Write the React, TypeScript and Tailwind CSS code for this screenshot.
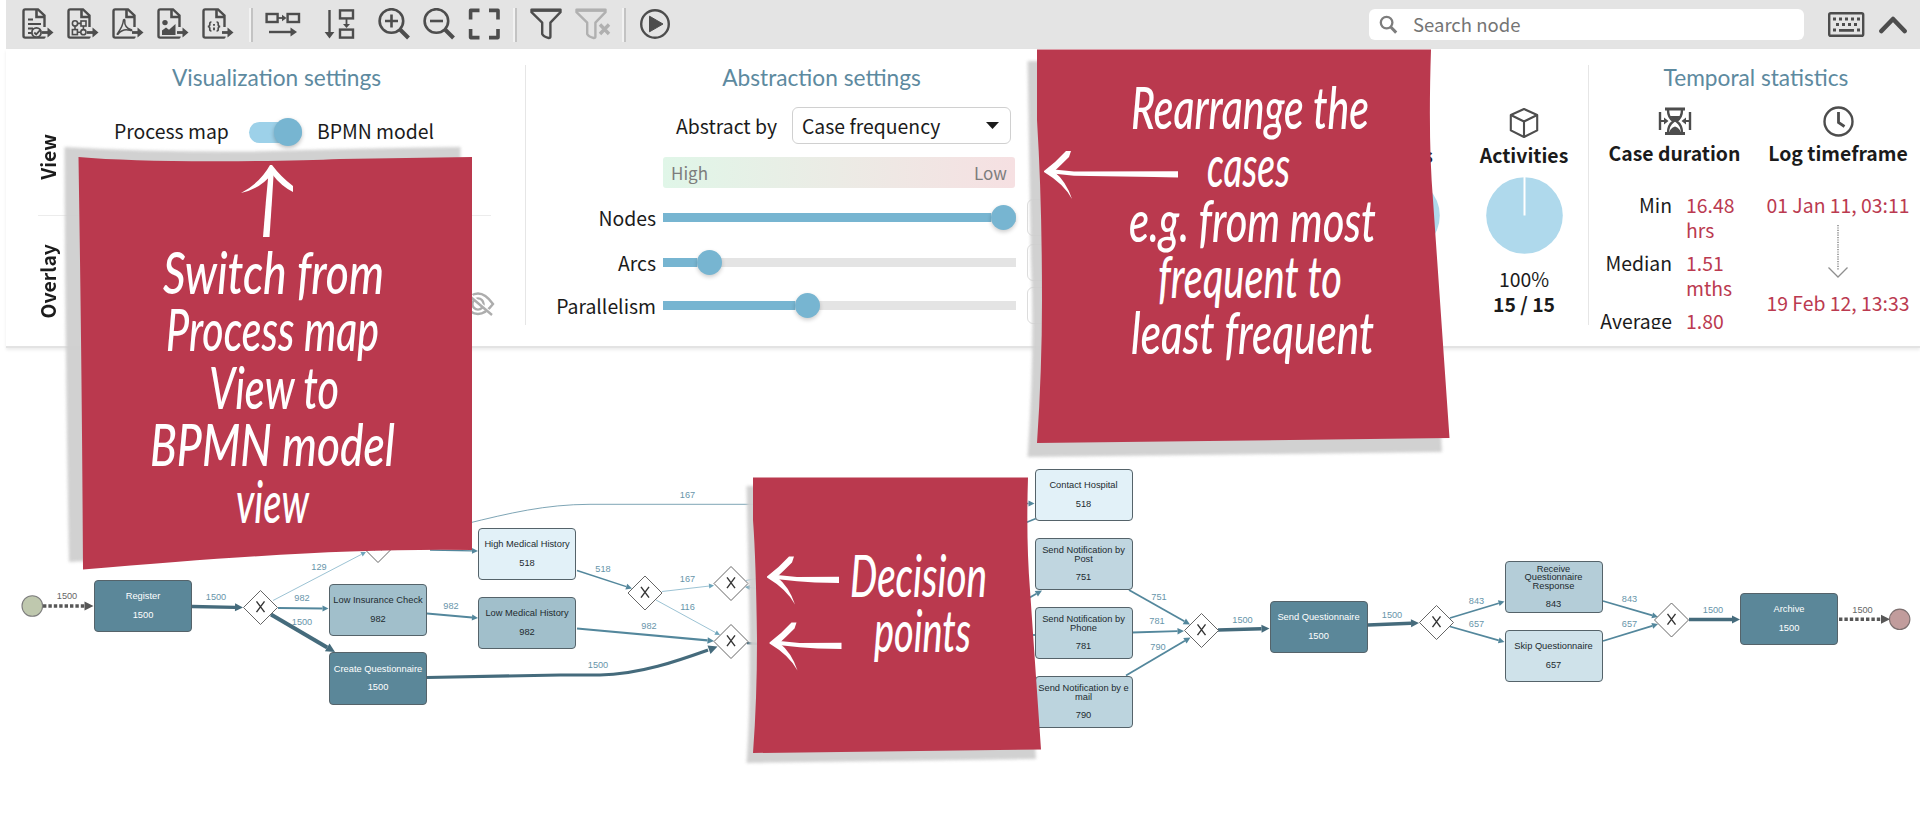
import React from "react";

const INK = "#4d4d4d";

/* ---------- toolbar icons ---------- */

function DocIcon({ children }: { children: React.ReactNode }) {
  return (
    <svg width="32" height="32" viewBox="0 0 32 32" fill="none" stroke={INK} strokeWidth="2.4" className="shrink-0">
      <path d="M22.5 19V7.5L16 1.4H3.2Q1.5 1.4 1.5 3.2V28Q1.5 29.6 3.2 29.6H21Q22.5 29.6 22.5 28.4" />
      <path d="M14.5 2V9H22" strokeWidth="2.6" />
      <path d="M20 24.5H28" strokeWidth="2.8" />
      <path d="M25.5 19.5L31.5 24.5L25.5 29.5Z" fill={INK} stroke="none" />
      {children}
    </svg>
  );
}

function FlowRight() {
  return (
    <svg width="36" height="32" viewBox="0 0 36 32" fill="none" stroke={INK} strokeWidth="2.4" className="shrink-0">
      <rect x="1.6" y="6" width="11" height="8" />
      <rect x="22.6" y="6" width="11.4" height="8" />
      <path d="M13 10H19" strokeWidth="1.8" />
      <path d="M17 6.8L21.5 10L17 13.2Z" fill={INK} stroke="none" />
      <path d="M4 24H28" />
      <path d="M25.5 19.5L32 24L25.5 28.5Z" fill={INK} stroke="none" />
    </svg>
  );
}

function FlowDown() {
  return (
    <svg width="32" height="32" viewBox="0 0 32 32" fill="none" stroke={INK} strokeWidth="2.4" className="shrink-0">
      <path d="M6.5 2V26" />
      <path d="M1.6 24H11.4L6.5 30.5Z" fill={INK} stroke="none" />
      <rect x="17" y="2.4" width="13" height="8" />
      <rect x="17" y="21.6" width="13" height="8" />
      <path d="M23.5 11V17" strokeWidth="1.8" />
      <path d="M20 16L27 16L23.5 20Z" fill={INK} stroke="none" />
    </svg>
  );
}

function Magnifier({ plus }: { plus?: boolean }) {
  return (
    <svg width="32" height="32" viewBox="0 0 32 32" fill="none" stroke={INK} strokeWidth="2.6" className="shrink-0">
      <circle cx="13.4" cy="13" r="11.8" />
      <path d="M21.5 21L30.5 30" strokeWidth="4" />
      <path d={plus ? "M7 13H20M13.5 6.5V19.5" : "M7 13H20"} />
    </svg>
  );
}

function Fullscreen() {
  return (
    <svg width="32" height="32" viewBox="0 0 32 32" fill="none" stroke={INK} strokeWidth="3.6" className="shrink-0">
      <path d="M2.6 11.5V2.4H11.5M21 2.4H30V11.5M30 21V29.6H21M11.5 29.6H2.6V21" strokeLinejoin="round" />
    </svg>
  );
}

function Funnel({ off }: { off?: boolean }) {
  const c = off ? "#b0b0b0" : INK;
  return (
    <svg width="36" height="32" viewBox="0 0 36 32" fill="none" stroke={c} strokeWidth="2.4" className="shrink-0">
      <path d="M1.5 1.6H30.5V4.2L20.4 14.6V28.5Q20.4 30 18.8 30Q13.4 28.6 12.2 26V14.6L1.5 4.2Z" strokeLinejoin="round" />
      <path d="M1.5 2.4H30.5" strokeWidth="3" />
      {off && <path d="M25 16.5L34 26M34 16.5L25 26" stroke={c} strokeWidth="3.4" />}
    </svg>
  );
}

function Divider({ className }: { className: string }) {
  return <div className={`h-[34px] w-[4px] shrink-0 border-l-2 border-r-2 border-l-[#f2f2f2] border-r-[#c3c3c3] ${className}`} />;
}

function Toolbar() {
  return (
    <header className="ml-[6px] flex h-[49px] items-center bg-[#e4e4e4] pl-4">
      <div className="flex gap-[13px] pb-[2px]">
        <DocIcon>
          <g strokeWidth="1.8">
            <path d="M6 11.5H11M6 16H19M6 20.5H11M6 25H10" />
            <circle cx="14.5" cy="24.5" r="4.6" fill="#e4e4e4" />
            <path d="M12.3 24.5L14.2 26.4L18.6 21.6" />
          </g>
        </DocIcon>
        <DocIcon>
          <g strokeWidth="1.6">
            <circle cx="8" cy="15.4" r="2.6" />
            <rect x="14" y="13" width="5" height="5" />
            <rect x="5.4" y="21.6" width="5" height="5" />
            <circle cx="16.4" cy="24.2" r="2.6" />
            <path d="M10.6 15.4H14M8 18V21.6M16.4 18V21.6M10.4 24.2H13.8" />
          </g>
        </DocIcon>
        <DocIcon>
          <path
            d="M5.500 25.500C8 22 11 18 11.400 12.500C11.400 11 13.200 11.200 12.800 13C12.200 17 15 20.800 18.800 21.600C20.600 22 19.500 23 18 22.400C14 21 9.500 22.200 6.500 25.600C5.500 26.600 4.800 26.400 5.500 25.500Z"
            strokeWidth="1.5"
          />
        </DocIcon>
        <DocIcon>
          <circle cx="8" cy="14.6" r="2.7" fill={INK} stroke="none" />
          <path d="M5 27V22.5L9 19.5L12 21.8L18.5 16V27Z" fill={INK} stroke="none" />
        </DocIcon>
        <DocIcon>
          <g strokeWidth="1.7">
            <path d="M9.400 14.200Q7.600 14 7.800 16Q8 18.400 5.800 18.500Q8 18.600 7.800 21Q7.600 23 9.400 22.800" />
            <path d="M14.600 14.200Q16.400 14 16.200 16Q16 18.400 18.200 18.500Q16 18.600 16.200 21Q16.400 23 14.600 22.800" />
            <path d="M12 16V17.8M12 19.6V22.2" strokeWidth="1.9" />
          </g>
        </DocIcon>
      </div>
      <Divider className="ml-[15px]" />
      <div className="ml-[12px] flex items-center pb-[2px]">
        <FlowRight />
        <div className="ml-[22px] flex">
          <FlowDown />
        </div>
        <div className="ml-[23px] flex gap-[13px]">
          <Magnifier plus />
          <Magnifier />
          <Fullscreen />
        </div>
      </div>
      <Divider className="ml-[13px]" />
      <div className="ml-[13px] flex gap-[9px] pb-[2px]">
        <Funnel />
        <Funnel off />
      </div>
      <Divider className="ml-[11px]" />
      <svg width="30" height="32" viewBox="0 0 30 32" className="mb-[2px] ml-[14px] shrink-0">
        <circle cx="15" cy="16" r="13.8" fill="none" stroke={INK} strokeWidth="2.4" />
        <path d="M9.5 8.2L23 16L9.5 23.8Z" fill={INK} stroke={INK} strokeLinejoin="round" />
      </svg>
      <div className="ml-auto flex h-[31px] w-[435px] items-center rounded-[6px] bg-white pl-[10px]">
        <svg width="19" height="19" viewBox="0 0 19 19" fill="none" stroke="#7d7d7d">
          <circle cx="7.6" cy="7.6" r="5.8" strokeWidth="2.3" />
          <path d="M11.8 12L17.2 17.6" strokeWidth="3" />
        </svg>
        <span className="ml-[15px] -translate-y-px text-[18.5px] leading-[30px] text-[#757575]">Search node</span>
      </div>
      <svg width="37" height="26" viewBox="0 0 37 26" className="ml-[24px]" fill="none" stroke={INK}>
        <rect x="1.2" y="1.2" width="34" height="22.6" rx="1.6" strokeWidth="2.4" />
        <path d="M5 7H32" strokeWidth="3" strokeDasharray="3 3" />
        <path d="M8 12.5H30" strokeWidth="3" strokeDasharray="3 3" />
        <path d="M5 18H8M29 18H32M11 18.4H26" strokeWidth="2.8" />
      </svg>
      <svg width="28" height="19" viewBox="0 0 28 19" className="mr-[13px] ml-[14px]" fill="none" stroke={INK}>
        <path d="M2.4 16L14 4L25.6 16" strokeWidth="4.6" strokeLinejoin="round" strokeLinecap="round" />
      </svg>
    </header>
  );
}

/* ---------- settings panel ---------- */

function Title({ children }: { children: string }) {
  return (
    <h2 className="mt-[-2px] mb-[2px] text-center font-['Lato',sans-serif] text-[22.7px] leading-[30px] font-normal whitespace-nowrap text-[#5d8a9f]">
      {children}
    </h2>
  );
}

function SliderRow({ label, fill }: { label: string; fill: string }) {
  return (
    <div className="flex h-[37px] items-center">
      <span className="w-[131px] text-right">{label}</span>
      <div className="ml-[7px] flex h-[9px] w-[353px] items-center bg-[#e4e4e4]">
        <div className={`h-[9px] bg-[#77b5d1] ${fill}`} />
        <div className="size-[25px] shrink-0 rounded-full bg-[#77b5d1] shadow-[0_2px_4px_rgba(0,0,0,0.2)]" />
      </div>
      <div className="ml-[11px] h-[37px] w-[70px] rounded-[6px] border border-[#dcdcdc]" />
    </div>
  );
}

function Settings() {
  return (
    <section className="ml-[6px] flex h-[299px] items-start overflow-hidden border-b-2 border-[#e3e3e3] pt-[16px] text-[19.4px] leading-[25px] text-[#1b1b1b] shadow-[0_2px_3px_rgba(0,0,0,0.08)]">
      <div className="h-[260px] w-[519px] shrink-0">
        <div className="pl-[22px]">
          <Title>Visualization settings</Title>
        </div>
        <div className="ml-8 flex h-[121px] w-[453px] border-b border-[#ececec]">
          <div className="flex w-[20px] items-end justify-center pb-[35px]">
            <span className="rotate-180 leading-[20px] font-bold [writing-mode:vertical-rl]">View</span>
          </div>
          <div className="flex h-[30px] flex-1 items-center pt-[46px]">
            <span className="mt-[-22px] ml-[56px] w-[115px] whitespace-nowrap">Process map</span>
            <div className="mt-[-18px] ml-[20px] flex h-[21px] w-[53px] items-center justify-end rounded-full bg-[#9dd1e9]">
              <div className="size-[28px] shrink-0 rounded-full bg-[#77b5d1] shadow-[0_2px_4px_rgba(0,0,0,0.25)]" />
            </div>
            <span className="mt-[-22px] ml-[15px] whitespace-nowrap">BPMN model</span>
          </div>
        </div>
        <div className="ml-8 flex h-[109px] w-[457px] items-end justify-between">
          <span className="mb-[7px] w-[20px] rotate-180 leading-[20px] font-bold [writing-mode:vertical-rl]">Overlay</span>
          <svg width="34" height="24" viewBox="0 0 34 24" className="mb-[9px]" fill="none" stroke="#adadad" strokeWidth="2.4">
            <path d="M2 12Q17 -9 32 12Q17 32 2 12Z" />
            <circle cx="17" cy="12" r="5.6" />
            <path d="M6 0L32 23" strokeWidth="3" stroke="#fff" />
            <path d="M5 1L31 23" />
          </svg>
        </div>
      </div>

      <div className="h-[260px] w-[592px] shrink-0 border-l border-[#e6e6e6]">
        <Title>Abstraction settings</Title>
        <div className="mt-[14px] flex h-[37px] items-center">
          <span className="w-[251px] text-right">Abstract by</span>
          <div className="ml-[15px] flex h-[37px] w-[219px] items-center justify-between rounded-[6px] border border-[#d0d0d0] pr-[11px] pl-[9px]">
            <span>Case frequency</span>
            <svg width="13" height="7" viewBox="0 0 13 7">
              <path d="M0 0H13L6.5 7Z" fill="#1b1b1b" />
            </svg>
          </div>
        </div>
        <div className="mt-[13px] ml-[137px] flex h-[31px] w-[352px] items-center justify-between rounded-[3px] bg-linear-to-r from-[#e0f6e8] to-[#f6e0e2] px-[8px] text-[17px] text-[#7d7d7d]">
          <span>High</span>
          <span>Low</span>
        </div>
        <div className="mt-[11px] ml-[-1px]">
          <SliderRow label="Nodes" fill="w-[328px]" />
          <div className="h-[8px]" />
          <SliderRow label="Arcs" fill="w-[34px]" />
          <div className="h-[6px]" />
          <SliderRow label="Parallelism" fill="w-[132px]" />
        </div>
      </div>

      <div className="flex h-[260px] w-[471px] shrink-0 items-start justify-end pt-[41px]">
        {[
          { name: "Events", pct: "", count: "" },
          { name: "Activities", pct: "100%", count: "15 / 15" },
        ].map((s) => (
          <div key={s.name} className="mr-[1px] flex w-[122px] flex-col items-center last:mr-[3px]">
            <svg width="30" height="32" viewBox="0 0 30 32" fill="none" stroke={INK} strokeWidth="2.1" strokeLinejoin="round">
              <path d="M15 3L28.2 9V24.4L15 31L1.8 24.4V9Z" />
              <path d="M1.8 9L15 15.5L28.2 9M15 15.5V31" />
            </svg>
            <span className="mt-[4px] font-bold">{s.name}</span>
            <svg width="77" height="77" viewBox="0 0 77 77" className="mt-[10px]">
              <circle cx="38.5" cy="38.5" r="38.3" fill="#afd9ec" />
              <path d="M38.500 0V38.500" stroke="#fff" strokeWidth="2" />
            </svg>
            <span className="mt-[12px]">{s.pct}</span>
            <span className="font-bold">{s.count}</span>
          </div>
        ))}
      </div>

      <div className="flex h-[264px] flex-1 overflow-hidden">
        <div className="h-[260px] w-px shrink-0 bg-[#e6e6e6]" />
        <div className="w-full">
          <div className="pl-[3px]">
            <Title>Temporal statistics</Title>
          </div>
          <div className="mt-[13px] flex">
            <div className="w-[173px]">
              <div className="flex flex-col items-center pr-[2px]">
                <svg width="34" height="31" viewBox="0 0 34 31" fill="none" stroke={INK}>
                  <path d="M2 6V24M32 6V24" strokeWidth="2.4" />
                  <path d="M3 15H8M31 15H26" strokeWidth="2" />
                  <path d="M6 11.5L10.5 15L6 18.5ZM28 11.5L23.5 15L28 18.5Z" fill={INK} stroke="none" />
                  <path d="M7 3H27M7 27.5H27" strokeWidth="3" />
                  <path d="M10 4Q10 11.5 15.5 15.2Q10 19 10 27M24 4Q24 11.5 18.5 15.2Q24 19 24 27" strokeWidth="2.4" />
                  <path d="M11.5 10H22.5L17 16ZM11 27Q12 22 17 20.5Q22 22 23 27Z" fill={INK} stroke="none" />
                </svg>
                <span className="mt-[3px] font-bold">Case duration</span>
              </div>
              <div className="mt-[27px] grid grid-cols-[83px_1fr] gap-x-[14px] gap-y-[8px]">
                <span className="text-right">Min</span>
                <span className="w-[50px] text-[#bb3a50]">16.48 hrs</span>
                <span className="text-right">Median</span>
                <span className="w-[50px] text-[#bb3a50]">1.51 mths</span>
                <span className="text-right">Average</span>
                <span className="w-[50px] text-[#bb3a50]">1.80</span>
              </div>
            </div>
            <div className="flex w-[152px] flex-col items-center whitespace-nowrap">
              <svg width="31" height="31" viewBox="0 0 31 31" fill="none" stroke={INK} strokeWidth="2.4">
                <circle cx="15.5" cy="15.5" r="14" />
                <path d="M15.5 6V16.5L21.5 20.5" strokeWidth="2.8" />
              </svg>
              <span className="mt-[3px] font-bold">Log timeframe</span>
              <span className="mt-[27px] text-[#bb3a50]">01 Jan 11, 03:11</span>
              <svg width="22" height="56" viewBox="0 0 22 56" className="mt-[7px]" fill="none" stroke="#8f8f8f">
                <path d="M11 1V46" strokeWidth="1.6" strokeDasharray="1.2 1.2" />
                <path d="M1.5 43.5L11 53L20.5 43.5" strokeWidth="1.3" />
              </svg>
              <span className="mt-[10px] text-[#bb3a50]">19 Feb 12, 13:33</span>
            </div>
          </div>
        </div>
      </div>
    </section>
  );
}

/* ---------- process diagram; coordinates are canvas pixels ---------- */

type Task = { x: number; y: number; label: string; n: number; bg: string; light?: boolean };

const TASKS: Task[] = [
  { x: 94, y: 579.5, label: "Register", n: 1500, bg: "#5b8799", light: true },
  { x: 329, y: 583.5, label: "Low Insurance Check", n: 982, bg: "#a1bfcb" },
  { x: 329, y: 652, label: "Create Questionnaire", n: 1500, bg: "#5b8799", light: true },
  { x: 478, y: 527.5, label: "High Medical History", n: 518, bg: "#e2f1f8" },
  { x: 478, y: 596.5, label: "Low Medical History", n: 982, bg: "#a1bfcb" },
  { x: 1034.5, y: 468.5, label: "Contact Hospital", n: 518, bg: "#e2f1f8" },
  { x: 1034.5, y: 537.5, label: "Send Notification by\nPost", n: 751, bg: "#c0d6e0" },
  { x: 1034.5, y: 606.5, label: "Send Notification by\nPhone", n: 781, bg: "#bcd4de" },
  { x: 1034.5, y: 675.5, label: "Send Notification by e\nmail", n: 790, bg: "#bcd4de" },
  { x: 1269.5, y: 600.5, label: "Send Questionnaire", n: 1500, bg: "#5b8799", light: true },
  { x: 1504.5, y: 560.5, label: "Receive\nQuestionnaire\nResponse", n: 843, bg: "#b4cdd8" },
  { x: 1504.5, y: 629.5, label: "Skip Questionnaire", n: 657, bg: "#cfe2ea" },
  { x: 1740, y: 592.5, label: "Archive", n: 1500, bg: "#5b8799", light: true },
];

const GATEWAYS: [number, number][] = [
  [260.5, 607.5],
  [378, 545.5],
  [645, 593],
  [731, 583.5],
  [731, 641.5],
  [1201.5, 630.5],
  [1436.5, 622.5],
  [1671.5, 620],
];

const DARK = "#456b7c";
const MID = "#53879c";
const SOFT = "#9cc3d4";

type Edge = { p: [number, number, number, number]; w: number; c: string; head?: number; tip?: string };

const EDGES: Edge[] = [
  { p: [192, 606.5, 243, 607.5], w: 3.4, c: DARK, head: 8 },
  { p: [273, 600.5, 366, 552], w: 1, c: SOFT, head: 5, tip: "#6fa5bb" },
  { p: [278, 608, 328.5, 608.5], w: 2, c: MID, head: 6 },
  { p: [271, 614.5, 335, 652], w: 4, c: DARK, head: 9 },
  { p: [427, 613.5, 478, 618], w: 2, c: MID, head: 6 },
  { p: [430, 550, 478, 551], w: 1.4, c: MID, head: 6 },
  { p: [577, 570.5, 632, 588.5], w: 1.5, c: MID, head: 6 },
  { p: [577, 628.5, 714, 641], w: 2.2, c: MID, head: 6.5 },
  { p: [662, 591.5, 714, 585.5], w: 1, c: SOFT, head: 5, tip: "#6fa5bb" },
  { p: [656, 600, 720, 635], w: 1, c: SOFT, head: 5, tip: "#6fa5bb" },
  { p: [746, 580.5, 770, 576], w: 1.2, c: SOFT },
  { p: [770, 590, 745, 587], w: 1, c: SOFT, head: 5, tip: "#6fa5bb" },
  { p: [747, 643, 770, 645], w: 2.6, c: DARK },
  { p: [1010, 503.5, 1034.5, 503.5], w: 1.5, c: MID, head: 6 },
  { p: [1015, 527, 1036, 518.5], w: 1.5, c: MID },
  { p: [1020, 603, 1042, 590.5], w: 1.8, c: MID, head: 6.5 },
  { p: [1020, 635, 1035, 635], w: 1.8, c: MID },
  { p: [1129, 590, 1190, 624.5], w: 1.8, c: MID, head: 6.5 },
  { p: [1132, 632.5, 1184, 631], w: 1.8, c: MID, head: 6.5 },
  { p: [1126, 675.5, 1190.5, 637.5], w: 1.8, c: MID, head: 6.5 },
  { p: [1218, 630, 1269.5, 628.5], w: 3.4, c: DARK, head: 8 },
  { p: [1368, 625, 1419, 623], w: 3.4, c: DARK, head: 8 },
  { p: [1450, 618, 1504.5, 601.5], w: 1.8, c: MID, head: 6 },
  { p: [1450, 626.5, 1504.5, 642], w: 1.8, c: MID, head: 6 },
  { p: [1603, 601, 1658, 617], w: 1.8, c: MID, head: 6 },
  { p: [1603, 641, 1658, 624], w: 1.8, c: MID, head: 6 },
  { p: [1689, 619.5, 1740, 619.5], w: 3.4, c: DARK, head: 8 },
];

const COUNTS: [number, number, string][] = [
  [216, 597, "1500"],
  [319, 567, "129"],
  [302, 598, "982"],
  [302, 622, "1500"],
  [451, 606, "982"],
  [687.5, 494.5, "167"],
  [603, 569, "518"],
  [598, 665, "1500"],
  [649, 626, "982"],
  [687.5, 579, "167"],
  [687.5, 607, "116"],
  [1159, 596.5, "751"],
  [1157, 621, "781"],
  [1158, 647, "790"],
  [1242.5, 619.5, "1500"],
  [1392, 614.5, "1500"],
  [1476.5, 600.5, "843"],
  [1476.5, 624, "657"],
  [1629.5, 598.5, "843"],
  [1629.5, 623.5, "657"],
  [1713, 610, "1500"],
];

function Arrow({ e }: { e: Edge }) {
  const [x1, y1, x2, y2] = e.p;
  const len = Math.hypot(x2 - x1, y2 - y1);
  const ux = (x2 - x1) / len;
  const uy = (y2 - y1) / len;
  const h = e.head ?? 0;
  const bx = x2 - ux * h;
  const by = y2 - uy * h;
  const k = h * 0.5;
  return (
    <g>
      <path d={`M${x1} ${y1}L${bx} ${by}`} stroke={e.c} strokeWidth={e.w} />
      {h > 0 && (
        <path d={`M${x2} ${y2}L${bx - uy * k} ${by + ux * k}L${bx + uy * k} ${by - ux * k}Z`} fill={e.tip ?? e.c} />
      )}
    </g>
  );
}

function Diagram() {
  return (
    <div className="absolute inset-0 font-['Liberation_Sans',Arial,sans-serif]">
      <svg width="1920" height="828" viewBox="0 0 1920 828" fill="none">
        {EDGES.map((e, i) => (
          <Arrow key={i} e={e} />
        ))}
        <path d="M427 677.5L560 675H600C640 674.5 680 660 708 650" stroke={DARK} strokeWidth="3.2" />
        <path d="M717.5 646.5L710.5 654L707.5 645.5Z" fill={DARK} />
        <path d="M465 524C510 513 545 504.5 590 504.3H770" stroke={MID} strokeWidth="1" opacity=".75" />
        <path d="M43 606H85M1839 619.2H1882" stroke="#575757" strokeWidth="3.6" strokeDasharray="3.4 2" />
        <path d="M93.5 606L84.5 601.5V610.5ZM1890 619.2L1881 614.7V623.7Z" fill="#575757" />
        <circle cx="32.3" cy="606" r="10.3" fill="#bfc8ae" stroke="#7c7c7c" strokeWidth="1.1" />
        <circle cx="1899.7" cy="619.3" r="10.2" fill="#c19c9c" stroke="#7c6f6f" strokeWidth="1.1" />
        {GATEWAYS.map(([x, y]) => (
          <g key={`${x}-${y}`}>
            <path d={`M${x} ${y - 17}L${x + 17} ${y}L${x} ${y + 17}L${x - 17} ${y}Z`} fill="#fff" stroke="#666" />
            <path d={`M${x - 4} ${y - 6.2}L${x + 4} ${y + 4.6}M${x + 4} ${y - 6.2}L${x - 4} ${y + 4.6}`} stroke="#333" strokeWidth="1.4" />
          </g>
        ))}
        <g fontSize="9.2" textAnchor="middle" fill="#6795aa">
          {COUNTS.map(([x, y, t]) => (
            <text key={`${x}-${y}`} x={x} y={y + 3.2}>
              {t}
            </text>
          ))}
          <text x="67" y="599" fill="#666">1500</text>
          <text x="1862.5" y="612.5" fill="#666">1500</text>
        </g>
      </svg>
      {TASKS.map((t) => (
        <div
          key={t.label}
          className={`absolute flex h-[52.5px] w-[98px] flex-col items-center justify-center gap-[9.5px] rounded-[4px] border border-[#55636a] text-center text-[9.3px] leading-[8.7px] whitespace-pre ${
            t.light ? "text-white" : "text-[#222b30]"
          }`}
          style={{ left: t.x, top: t.y, backgroundColor: t.bg }}
        >
          <span>{t.label}</span>
          <span>{t.n}</span>
        </div>
      ))}
    </div>
  );
}

/* ---------- sticky notes ---------- */

type Line = { t: string; x1: number; x2: number; y: number };

const LINES: Line[] = [
  { t: "Switch from", x1: 163, x2: 384, y: 294 },
  { t: "Process map", x1: 166, x2: 379, y: 351 },
  { t: "View to", x1: 209, x2: 339, y: 409 },
  { t: "BPMN model", x1: 150, x2: 395, y: 466 },
  { t: "view", x1: 236, x2: 309, y: 523 },
  { t: "Rearrange the", x1: 1131, x2: 1369, y: 129 },
  { t: "cases", x1: 1207, x2: 1290, y: 187 },
  { t: "e.g. from most", x1: 1129, x2: 1376, y: 242 },
  { t: "frequent to", x1: 1158, x2: 1342, y: 298 },
  { t: "least frequent", x1: 1131, x2: 1374, y: 354 },
  { t: "Decision", x1: 850, x2: 987, y: 597 },
  { t: "points", x1: 874, x2: 971, y: 652 },
];

function Pointer({ x, y, len }: { x: number; y: number; len: number }) {
  return (
    <g transform={`translate(${x} ${y})`} fill="#fff">
      <path d={`M5 -2L30 0.5L${len} 0.3V6.6L${len - 24} 6L30 4.8L4 2Z`} />
      <path d="M0 0Q12 -9 22 -20L27 -20L25 -14Q17 -6 10 0.500Q22 10 28 28Q20 13 0 1Z" />
    </g>
  );
}

function Notes() {
  return (
    <svg width="1920" height="828" viewBox="0 0 1920 828" className="absolute inset-0">
      <defs>
        <filter id="soft" x="-5%" y="-5%" width="110%" height="110%">
          <feGaussianBlur stdDeviation="1.6" />
        </filter>
      </defs>
      <g fill="#cfcfcf" opacity=".95" filter="url(#soft)">
        <path d="M64.500 147Q150 152 250 151.500Q360 148 460.500 147V540L69 562Q65 350 64.500 147Z" />
        <path d="M1027.500 61H1420L1442 452L1027.500 457Q1035 350 1031 260Z" />
        <path d="M746.500 486H1020L1036 759L746.500 763Q751 700 749 600Z" />
      </g>
      <g fill="#ba394e">
        <path d="M78.500 157Q130 161.500 220 161.300Q300 161 340 159L472 157V550Q420 549 350 551.500Q250 555 83 569.500Q82 400 80 260Z" />
        <path d="M1037 49.500H1431Q1428 140 1433 200L1449.500 438L1037 443Q1042 370 1042 300Q1042 200 1037 120Z" />
        <path d="M753 477.500H1028Q1026 540 1030 590L1041 749.500L753 753Q757 700 757 640Q756 560 753 520Z" />
      </g>
      <g fill="#fff">
        <path d="M263 237L266 200L269 168L274 168L272 200L269.500 237Z" />
        <path d="M272 165Q281 177 293 186V192Q281 186 272 174Q260 189 241 193Q260 183 270 165Z" />
      </g>
      <Pointer x={1044} y={171} len={134} />
      <Pointer x={767} y={576.5} len={72} />
      <Pointer x={769.5} y={642.5} len={72} />
      <g fill="#fff" fontSize="58" fontStyle="italic" fontWeight="500" fontFamily="Lato, sans-serif">
        {LINES.map((l) => (
          <text key={l.t} x={l.x1} y={l.y} textLength={l.x2 - l.x1} lengthAdjust="spacingAndGlyphs">
            {l.t}
          </text>
        ))}
      </g>
    </svg>
  );
}

export default function App() {
  return (
    <main className="relative h-[828px] w-[1920px] overflow-hidden bg-white font-['Noto_Sans_CJK_SC',sans-serif]">
      <Toolbar />
      <Settings />
      <Diagram />
      <Notes />
    </main>
  );
}
